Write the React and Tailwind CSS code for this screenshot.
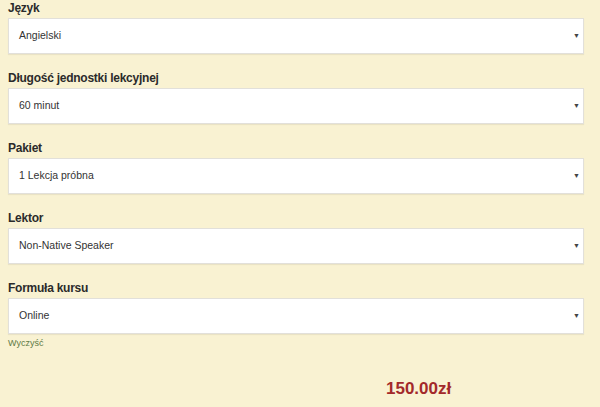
import React from 'react';

const fields = [
  { label: 'Język', value: 'Angielski' },
  { label: 'Długość jednostki lekcyjnej', value: '60 minut' },
  { label: 'Pakiet', value: '1 Lekcja próbna' },
  { label: 'Lektor', value: 'Non-Native Speaker' },
  { label: 'Formuła kursu', value: 'Online' },
];

export default function App() {
  return (
    <div className="w-[600px] h-[407px] bg-[#f9f2d2] overflow-hidden font-['Liberation_Sans',Arial,sans-serif]">
      <div className="pl-[8px] w-[584px]">
        <div className="flex flex-col gap-[16px]">
          {fields.map((f) => (
            <div key={f.label}>
              <div className="h-[16px] leading-[16px] text-[12px] tracking-[-0.25px] font-bold text-[#2b2b2b]">{f.label}</div>
              <div className="mt-[2px] h-[36px] bg-white border border-[#e2e0da] shadow-[0_1px_1px_rgba(0,0,0,0.06)] flex items-center justify-between pl-[10px] pr-[3px]">
                <span className="text-[10.5px] text-[#333]">{f.value}</span>
                <span className="text-[7px] text-[#444]">▼</span>
              </div>
            </div>
          ))}
        </div>
        <div className="mt-[3px] text-[9px] text-[#5f7a45]">Wyczyść</div>
        <div className="mt-[25px] pl-[378px] text-[17px] font-bold text-[#a3292a]">150.00zł</div>
      </div>
    </div>
  );
}
